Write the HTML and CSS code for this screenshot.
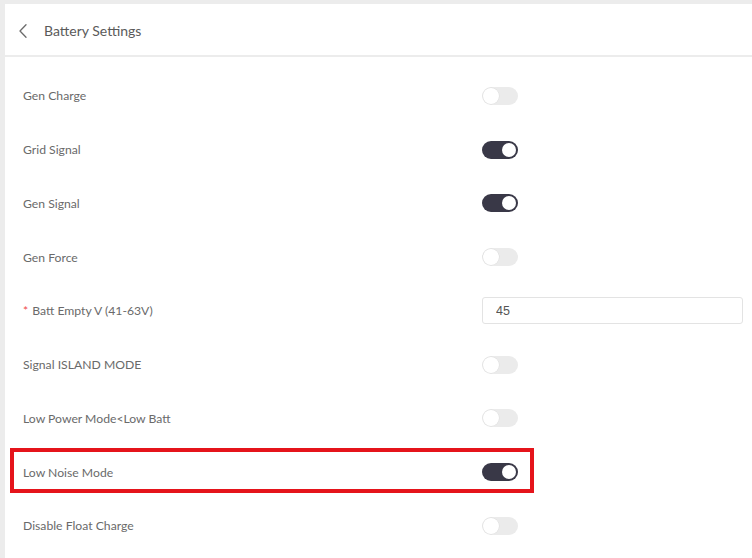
FILE: index.html
```html
<!DOCTYPE html>
<html lang="en">
<head>
<meta charset="utf-8">
<title>Battery Settings</title>
<link rel="stylesheet" href="styles.css">
</head>
<body>
<div class="page">
  <header class="header">
    <svg class="back" width="8" height="14" viewBox="0 0 8 14" aria-hidden="true">
      <path d="M7 0.8 L1 7 L7 13.2" fill="none" stroke="#6b6b6b" stroke-width="1.3" stroke-linecap="round" stroke-linejoin="round"/>
    </svg>
    <h1 class="title">Battery Settings</h1>
  </header>
  <div class="form">
    <div class="row"><span class="label">Gen Charge</span><span class="switch"></span></div>
    <div class="row"><span class="label">Grid Signal</span><span class="switch on"></span></div>
    <div class="row"><span class="label">Gen Signal</span><span class="switch on"></span></div>
    <div class="row"><span class="label">Gen Force</span><span class="switch"></span></div>
    <div class="row"><span class="label"><span class="req">*</span>Batt Empty V (41-63V)</span><input class="input" type="text" value="45"></div>
    <div class="row"><span class="label">Signal ISLAND MODE</span><span class="switch"></span></div>
    <div class="row"><span class="label">Low Power Mode&lt;Low Batt</span><span class="switch"></span></div>
    <div class="row highlighted"><span class="label">Low Noise Mode</span><span class="switch on"></span><span class="mark"></span></div>
    <div class="row"><span class="label">Disable Float Charge</span><span class="switch"></span></div>
  </div>
</div>
</body>
</html>
```
FILE: styles.css
```css
html, body {
  margin: 0;
  height: 100%;
}
body {
  background: #ececec;
  padding: 4px 0 0 5px;
  box-sizing: border-box;
  font-family: "Lato", "Open Sans", sans-serif;
  overflow: hidden;
}
.page {
  background: #ffffff;
  height: 100%;
}
.header {
  height: 51px;
  display: flex;
  align-items: center;
  padding-left: 14px;
  padding-top: 1px;
  box-sizing: border-box;
  border-bottom: 2px solid #ececec;
  height: 53px;
}
.back {
  display: block;
  margin-top: 1px;
}
.title {
  margin: 0 0 0 17px;
  font-size: 14px;
  font-weight: 400;
  color: #5a5a5a;
}
.form {
  padding-top: 12px;
}
.row {
  position: relative;
  height: 53.75px;
  display: grid;
  grid-template-columns: 459px 1fr;
  align-items: center;
  padding: 0 9px 0 18px;
}
.label {
  font-size: 12.2px;
  color: #6a6a6a;
}
.req {
  color: #f04a4a;
  margin-right: 4px;
}
.switch {
  position: relative;
  width: 36px;
  height: 18px;
  border-radius: 9px;
  background: #ebebeb;
  box-sizing: border-box;
}
.switch::after {
  content: "";
  position: absolute;
  left: 1px;
  top: 1px;
  width: 16px;
  height: 16px;
  border-radius: 50%;
  background: #ffffff;
  box-shadow: 0 0 0 0.5px #dcdcdc;
}
.switch.on {
  background: #393847;
}
.switch.on::after {
  left: auto;
  right: 2px;
  top: 2px;
  width: 14px;
  height: 14px;
  box-shadow: none;
}
.input {
  height: 27px;
  box-sizing: border-box;
  border: 1px solid #e3e3e3;
  border-radius: 3px;
  padding: 0 13px;
  font-family: "Liberation Sans", Arial, sans-serif;
  font-size: 12.5px;
  color: #555555;
  outline: none;
  width: 100%;
}
.mark {
  position: absolute;
  left: 5px;
  top: 3px;
  width: 524px;
  height: 45px;
  box-sizing: border-box;
  border: 4px solid #e5141b;
  pointer-events: none;
}
```
